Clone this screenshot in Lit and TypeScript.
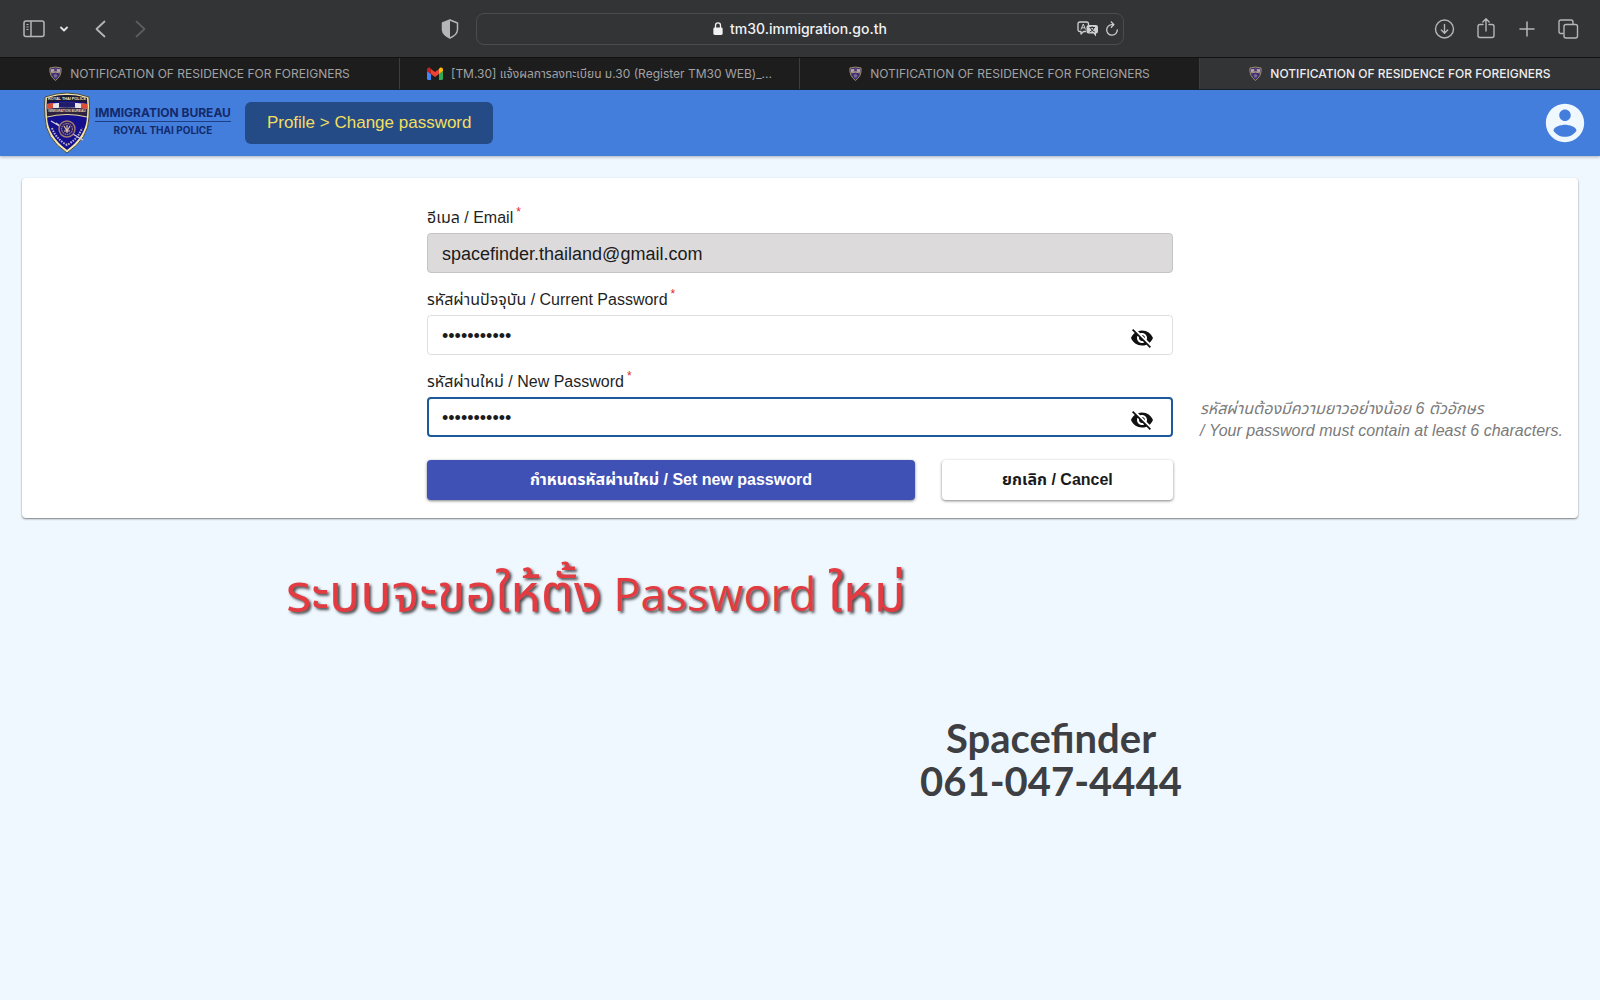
import { LitElement, html, css, svg } from "lit";
import { customElement, property, state } from "lit/decorators.js";
import { classMap } from "lit/directives/class-map.js";

const VISIBILITY_OFF =
  "M12 7c2.76 0 5 2.24 5 5 0 .65-.13 1.26-.36 1.83l2.92 2.92c1.51-1.26 2.7-2.89 3.43-4.75-1.73-4.39-6-7.5-11-7.5-1.4 0-2.74.25-3.98.7l2.16 2.16C10.74 7.13 11.35 7 12 7zM2 4.27l2.28 2.28.46.46C3.08 8.3 1.78 10.02 1 12c1.73 4.39 6 7.5 11 7.5 1.55 0 3.03-.3 4.38-.84l.42.42L19.73 22 21 20.73 3.27 3 2 4.27zM7.53 9.8l1.55 1.55c-.05.21-.08.43-.08.65 0 1.66 1.34 3 3 3 .22 0 .44-.03.65-.08l1.55 1.55c-.67.33-1.41.53-2.2.53-2.76 0-5-2.24-5-5 0-.79.2-1.53.53-2.2zm4.31-.78l3.15 3.15.02-.16c0-1.66-1.34-3-3-3l-.17.01z";
const VISIBILITY =
  "M12 4.5C7 4.5 2.73 7.61 1 12c1.73 4.39 6 7.5 11 7.5s9.27-3.11 11-7.5c-1.73-4.39-6-7.5-11-7.5zM12 17c-2.76 0-5-2.24-5-5s2.24-5 5-5 5 2.24 5 5-2.24 5-5 5zm0-8c-1.66 0-3 1.34-3 3s1.34 3 3 3 3-1.34 3-3-1.34-3-3-3z";

/* Immigration Bureau shield, drawn on a 46 x 62 grid. */
const shield = svg`
  <path d="M1 5Q12 1 23 1Q34 1 45 5Q46 14 45 25Q45 46 23 61Q1 46 1 25Q0 14 1 5Z" fill="#f1e5a8" stroke="#4b4a3c" stroke-width="1"/>
  <path d="M3 6Q13 3 23 3Q33 3 43 6Q44 15 43 25Q42 44 23 58Q4 44 3 25Q2 15 3 6Z" fill="#140f8c"/>
  <path d="M3 6Q13 3 23 3Q33 3 43 6L43 11Q23 7 3 11Z" fill="#1c1930"/>
  <path d="M3 12Q23 9 43 12L43 17Q23 14 3 17Z" fill="#e9e4ea"/>
  <path d="M3 12L9 11L9 16L3 17Z" fill="#dc4d33"/>
  <path d="M37 11L43 12L43 17L37 16Z" fill="#dc4d33"/>
  <path d="M15 10.500Q23 9.500 31 10.500L31 15.500Q23 15 15 15.500Z" fill="#211d6d"/>
  <path d="M3 17Q23 14 43 17L43 25Q23 20 3 25Z" fill="#2d2340"/>
  <path d="M3 25Q23 20 43 25" fill="none" stroke="#e8d9a0" stroke-width="1"/>
  <path d="M7 29L39 48M16 34L12 31" stroke="#d5d0dc" stroke-width="1.3"/>
  <path d="M8 36Q12 47 23 53Q34 47 38 36" fill="none" stroke="#b9b0c4" stroke-width="2" stroke-dasharray="1.6 1.1"/>
  <circle cx="23" cy="37" r="8" fill="#241a72" stroke="#a57c74" stroke-width="1.4"/>
  <circle cx="23" cy="37" r="5.4" fill="none" stroke="#c9a08a" stroke-width="1" stroke-dasharray="1.5 .8"/>
  <path d="M20 34L23 39L26 34M20 39H26M23 33V41" stroke="#e2c3a4" stroke-width="1.1" fill="none"/>
  <text x="23" y="8.2" text-anchor="middle" font-size="3.8" font-weight="700" fill="#f1e7c8">ROYAL THAI POLICE</text>
  <text x="23" y="20.4" text-anchor="middle" font-size="3.300" font-weight="700" fill="#e6d9b8">IMMIGRATION BUREAU</text>`;

/* The same shield reduced for tab icons. */
const shieldMini = svg`
  <path d="M1 1.500Q7 -.5 13 1.500Q14 10 7 15Q0 10 1 1.500Z" fill="#3a2f6e" stroke="#a5936f" stroke-width="1"/>
  <path d="M2 3Q7 1.500 12 3V6Q7 4.500 2 6Z" fill="#b8a6a4"/>
  <path d="M5.500 2.500H8.500V4.800H5.500Z" fill="#4a3a74"/>
  <path d="M2 6.800Q7 5.300 12 6.800" stroke="#b8a48c" fill="none"/>
  <circle cx="7" cy="10" r="2" fill="#7a6699"/>`;

const gmail = svg`
  <path d="M1.500 13H4V7L0 4v7.500A1.500 1.500 0 0 0 1.500 13Z" fill="#4285f4"/>
  <path d="M12 13h2.500a1.500 1.500 0 0 0 1.500-1.500V4l-4 3Z" fill="#34a853"/>
  <path d="M12 2v5l4-3V2.500C16 .8 14 0 12.700 1Z" fill="#fbbc04"/>
  <path d="M4 7V2l4 3 4-3v5L8 10Z" fill="#ea4335"/>
  <path d="M0 2.500V4l4 3V2L3.300 1C2 0 0 .8 0 2.500Z" fill="#c5221f"/>`;

interface TabInfo {
  title: string;
  icon: "shield" | "gmail";
  active?: boolean;
}

@customElement("browser-bar")
class BrowserBar extends LitElement {
  static styles = css`
    :host {
      display: block;
      font-family: Inter, "Noto Sans Thai", "Liberation Sans", sans-serif;
      background: #333436;
      color: #b5b6b8;
    }
    svg {
      display: block;
      fill: none;
      stroke: currentColor;
    }
    button {
      display: flex;
      align-items: center;
      justify-content: center;
      border: 0;
      padding: 0;
      background: none;
      color: inherit;
      font: inherit;
    }
    .toolbar {
      display: grid;
      grid-template-columns: 1fr 648px 1fr;
      column-gap: 16px;
      align-items: center;
      height: 57px;
      padding: 0 20px;
    }
    .group {
      display: flex;
      align-items: center;
    }
    .start {
      justify-content: space-between;
    }
    .sidebar {
      gap: 12px;
      margin-right: 20px;
    }
    .nav {
      gap: 16px;
    }
    .end {
      justify-content: flex-end;
      gap: 17px;
    }
    .dim {
      color: #5b5c5e;
    }
    .address {
      display: grid;
      grid-template-columns: 48px 1fr 48px;
      align-items: center;
      height: 30px;
      border: 1px solid #4b4c4e;
      border-radius: 8px;
      padding: 0 4px;
    }
    .url {
      display: flex;
      align-items: center;
      justify-content: center;
      gap: 7px;
      font-size: 14px;
      font-weight: 500;
      color: #f1f1f2;
    }
    .tools {
      display: flex;
      align-items: center;
      justify-content: flex-end;
      gap: 6px;
      color: #d0d0d1;
    }
    .tabs {
      display: grid;
      grid-template-columns: repeat(4, 1fr);
      height: 31px;
      border-top: 1px solid #111213;
      border-bottom: 1px solid #15222f;
      background: #1d1d1e;
    }
    .tab {
      gap: 8px;
      min-width: 0;
      border-right: 1px solid #3c3d3f;
      font-size: 12px;
      color: #a2a2a4;
      white-space: nowrap;
    }
    .tab svg {
      stroke: none;
    }
    .active {
      background: #333436;
      border-right: 0;
      color: #eeeeef;
      font-weight: 500;
    }
  `;

  @property({ attribute: false }) tabs: TabInfo[] = [];

  render() {
    return html`
      <div class="toolbar">
        <div class="group start">
          <div class="group">
            <div class="group sidebar">
              <button aria-label="Show sidebar">
                <svg width="28" height="20" viewBox="0 0 28 20">
                  <rect x="4" y="2" width="20" height="15.500" rx="2" stroke-width="1.500" />
                  <path d="M11 2V17.500" stroke-width="1.500" />
                  <path d="M6.500 5.500H8.500M6.500 8H8.500M6.500 10.500H8.500" />
                </svg>
              </button>
              <button aria-label="Tab groups">
                <svg width="8" height="8" viewBox="0 0 8 8">
                  <path d="M1 2.500L4 5.500L7 2.500" stroke="#e4e4e5" stroke-width="1.800" stroke-linecap="round" stroke-linejoin="round" />
                </svg>
              </button>
            </div>
            <div class="group nav">
              <button aria-label="Back">
                <svg width="24" height="24" viewBox="0 0 24 24">
                  <path d="M16.500 4.500L8.500 12L16.500 19.500" stroke-width="1.800" stroke-linecap="round" stroke-linejoin="round" />
                </svg>
              </button>
              <button class="dim" aria-label="Forward">
                <svg width="24" height="24" viewBox="0 0 24 24">
                  <path d="M8.500 4.500L16.500 12L8.500 19.500" stroke-width="1.800" stroke-linecap="round" stroke-linejoin="round" />
                </svg>
              </button>
            </div>
          </div>
          <button aria-label="Privacy report">
            <svg width="20" height="20" viewBox="0 0 18 20">
              <path d="M9 1L16.500 4V11Q16 16 9 19Q2 16 1.500 11V4Z" stroke-width="1.500" stroke-linejoin="round" />
              <path d="M9 1V19Q2 16 1.500 11V4Z" fill="currentColor" stroke="none" />
            </svg>
          </button>
        </div>
        <div class="address">
          <span></span>
          <span class="url">
            <svg width="10" height="13" viewBox="0 0 10 14">
              <rect x="0" y="6" width="10" height="8" rx="1.500" fill="currentColor" stroke="none" />
              <path d="M2.300 6.500V3.700Q2.300 1 5 1Q7.700 1 7.700 3.700V6.500" stroke-width="1.400" />
            </svg>
            tm30.immigration.go.th
          </span>
          <span class="tools">
            <button aria-label="Translate">
              <svg width="22" height="16" viewBox="0 0 22 16">
                <path d="M9 10.500H6.500L4 13V10.500H3Q1 10.500 1 8.500V3Q1 1 3 1H9.500Q11.500 1 11.500 3V4" stroke-width="1.300" stroke-linejoin="round" />
                <path d="M4 8.500L6.300 3L8.500 8.500M4.800 6.800H7.800" stroke-width="1" />
                <path d="M11.500 4H19Q21 4 21 6V10.500Q21 12.500 19 12.500V15.500L16.500 12.500H11.500Q9.500 12.500 9.500 10.500V6Q9.500 4 11.500 4Z" fill="currentColor" stroke="none" />
                <path d="M12.500 6.500H18M15.200 5.300V6.500M17 6.700Q16 10 12.800 11M13.300 6.700Q14.500 10 17.800 11" stroke="#333436" stroke-width="1" />
              </svg>
            </button>
            <button aria-label="Reload">
              <svg width="14" height="16" viewBox="0 0 14 16">
                <path d="M12.300 8.800A5.300 5.300 0 1 1 7 3.600H8.500" stroke-width="1.300" stroke-linecap="round" />
                <path d="M6.300 1L8.900 3.600L6.300 6.200" stroke-width="1.300" stroke-linecap="round" stroke-linejoin="round" />
              </svg>
            </button>
          </span>
        </div>
        <div class="group end">
          <button aria-label="Downloads">
            <svg width="24" height="24" viewBox="0 0 24 24">
              <circle cx="11.500" cy="12" r="9" stroke-width="1.400" />
              <path d="M11.500 7.500V16M8.300 13L11.500 16.300L14.700 13" stroke-width="1.400" stroke-linecap="round" stroke-linejoin="round" />
            </svg>
          </button>
          <button aria-label="Share">
            <svg width="24" height="24" viewBox="0 0 24 24">
              <path d="M9 7.500H6Q4 7.500 4 9.500V18.500Q4 20.500 6 20.500H18Q20 20.500 20 18.500V9.500Q20 7.500 18 7.500H15M12 14V1.800M8.800 5L12 1.800L15.200 5" stroke-width="1.400" stroke-linecap="round" stroke-linejoin="round" />
            </svg>
          </button>
          <button aria-label="New tab">
            <svg width="24" height="24" viewBox="0 0 24 24">
              <path d="M12 5V19M5 12H19" stroke-width="1.500" stroke-linecap="round" />
            </svg>
          </button>
          <button aria-label="Show all tabs">
            <svg width="24" height="24" viewBox="0 0 24 24">
              <rect x="8" y="7.500" width="13.500" height="13.500" rx="2" stroke-width="1.400" />
              <path d="M7.500 16.500H5Q3 16.500 3 14.500V5Q3 3 5 3H15Q17 3 17 5V7" stroke-width="1.400" />
            </svg>
          </button>
        </div>
      </div>
      <div class="tabs" role="tablist">
        ${this.tabs.map(
          (tab) => html`
            <button role="tab" aria-selected=${tab.active ? "true" : "false"} class=${classMap({ tab: true, active: !!tab.active })}>
              ${tab.icon === "shield"
                ? html`<svg width="13" height="16" viewBox="0 0 14 16">${shieldMini}</svg>`
                : html`<svg width="16" height="13" viewBox="0 0 16 13">${gmail}</svg>`}
              <span>${tab.title}</span>
            </button>
          `,
        )}
      </div>
    `;
  }
}

@customElement("site-header")
class SiteHeader extends LitElement {
  static styles = css`
    :host {
      display: flex;
      align-items: center;
      height: 66px;
      padding: 0 12px 0 44px;
      background: #447edd;
      box-shadow: 0 1px 3px #0000004d;
      position: relative;
    }
    .brand {
      display: flex;
      align-items: center;
      gap: 5px;
      text-decoration: none;
      color: #132a6b;
      font-family: Inter, sans-serif;
      font-weight: 700;
      text-align: center;
    }
    .shield {
      display: block;
      font-family: "Liberation Sans", sans-serif;
    }
    .names {
      padding-bottom: 4px;
    }
    .bureau {
      display: block;
      border-bottom: 1px solid #1f3f87;
      font-size: 12px;
      line-height: 17px;
    }
    .police {
      display: block;
      font-size: 10px;
      line-height: 16px;
    }
    .crumb {
      margin-left: 14px;
      border-radius: 6px;
      padding: 0 22px;
      background: #254b87;
      color: #f3df5d;
      font: 17px/42px "Liberation Sans", Arial, sans-serif;
    }
    .account {
      display: flex;
      margin-left: auto;
      border: 0;
      padding: 0;
      background: none;
      color: #f0f8ff;
    }
  `;

  render() {
    return html`
      <a class="brand" href="#">
        <svg class="shield" width="46" height="62" viewBox="0 0 46 62" aria-hidden="true">${shield}</svg>
        <span class="names">
          <span class="bureau">IMMIGRATION BUREAU</span>
          <span class="police">ROYAL THAI POLICE</span>
        </span>
      </a>
      <nav class="crumb">Profile &gt; Change password</nav>
      <button class="account" aria-label="Account">
        <svg width="46" height="46" viewBox="0 0 24 24" fill="currentColor">
          <path d="M12 2C6.480 2 2 6.480 2 12s4.480 10 10 10 10-4.480 10-10S17.520 2 12 2zm0 3c1.660 0 3 1.340 3 3s-1.340 3-3 3-3-1.340-3-3 1.340-3 3-3zm0 14.200c-2.500 0-4.710-1.280-6-3.220.03-1.990 4-3.080 6-3.080 1.990 0 5.970 1.090 6 3.080-1.290 1.940-3.500 3.220-6 3.220z" />
        </svg>
      </button>
    `;
  }
}

@customElement("password-field")
class PasswordField extends LitElement {
  static styles = css`
    :host {
      display: block;
    }
    .label {
      display: block;
      font-size: 16px;
      line-height: 34px;
      height: 32px;
      white-space: nowrap;
    }
    .star {
      margin-left: 3px;
      font-size: 12px;
      line-height: 0;
      vertical-align: 7px;
      color: #e0252d;
    }
    .box {
      display: flex;
      align-items: center;
      box-sizing: border-box;
      height: 40px;
      border: 1px solid #dedede;
      border-radius: 4px;
      padding: 0 18px 0 14px;
      background: #fff;
    }
    .readonly {
      background: #dcdadb;
      border-color: #c4c4c4;
    }
    .focused {
      border: 2px solid #1d5a99;
      padding: 0 17px 0 13px;
    }
    .input {
      flex: 1;
      min-width: 0;
      border: 0;
      outline: 0;
      padding: 2px 0 0;
      background: none;
      color: #1b1b1b;
      font: 18px/24px "Liberation Sans", Arial, sans-serif;
    }
    .toggle {
      display: flex;
      border: 0;
      padding: 6px 0 0;
      background: none;
      color: #111;
    }
  `;

  @property() label = "";
  @property() value = "";
  @property({ type: Boolean }) secret = false;
  @property({ type: Boolean }) focused = false;
  @state() private shown = false;

  render() {
    return html`
      <label class="label" for="field">${this.label}<span class="star">*</span></label>
      <div class=${classMap({ box: true, readonly: !this.secret, focused: this.focused })}>
        <input
          class="input"
          id="field"
          type=${this.secret && !this.shown ? "password" : "text"}
          .value=${this.value}
          ?readonly=${!this.secret}
        />
        ${this.secret
          ? html`<button class="toggle" aria-label="Show password" @click=${() => (this.shown = !this.shown)}>
              <svg width="24" height="24" viewBox="0 0 24 24" fill="currentColor">
                <path d=${this.shown ? VISIBILITY : VISIBILITY_OFF} />
              </svg>
            </button>`
          : null}
      </div>
    `;
  }
}

@customElement("app-root")
class AppRoot extends LitElement {
  static styles = css`
    :host {
      display: block;
      min-height: 100vh;
      background: #f0f8ff;
      color: #1f1f1f;
      font-family: "Liberation Sans", Arial, "Noto Sans Thai", sans-serif;
      font-size: 16px;
    }
    .card {
      display: grid;
      grid-template-columns: 1fr 2fr 1fr;
      margin: 22px 22px 0;
      border-radius: 4px;
      padding: 23px 0 18px;
      background: #fff;
      box-shadow: 0 1px 2px #00000080;
    }
    .form {
      display: grid;
      gap: 10px;
      grid-column: 2;
      padding: 0 16px;
    }
    .hint {
      align-self: end;
      padding: 0 0 58px 11px;
      color: #7b7b7b;
      font-style: italic;
      line-height: 22px;
      white-space: nowrap;
    }
    .actions {
      display: grid;
      grid-template-columns: 19fr 9fr;
      gap: 27px;
      margin-top: 13px;
    }
    .action {
      height: 40px;
      border: 0;
      border-radius: 4px;
      padding: 0;
      background: #fff;
      color: #1a1a1a;
      font: inherit;
      font-weight: 700;
      box-shadow: 0 1px 3px #00000080;
    }
    .primary {
      background: #3f51b5;
      color: #fff;
    }
    .captions {
      position: relative;
    }
    .caption {
      position: absolute;
      left: 286px;
      top: 33px;
      margin: 0;
      color: #e23c42;
      font: 45px/80px "Open Sans", "Noto Sans Thai", sans-serif;
      white-space: nowrap;
      text-shadow: 2px 2px 3px #000000b3;
    }
    .thai {
      font-size: 52px;
    }
    .contact {
      position: absolute;
      left: 911px;
      top: 199px;
      width: 280px;
      margin: 0;
      color: #3d3f42;
      font: 700 40px/43px Lato, sans-serif;
      text-align: center;
      white-space: nowrap;
    }
    .line {
      display: block;
    }
  `;

  private tabs: TabInfo[] = [
    { title: "NOTIFICATION OF RESIDENCE FOR FOREIGNERS", icon: "shield" },
    { title: "[TM.30] แจ้งผลการลงทะเบียน ม.30 (Register TM30 WEB)_...", icon: "gmail" },
    { title: "NOTIFICATION OF RESIDENCE FOR FOREIGNERS", icon: "shield" },
    { title: "NOTIFICATION OF RESIDENCE FOR FOREIGNERS", icon: "shield", active: true },
  ];

  render() {
    return html`
      <browser-bar .tabs=${this.tabs}></browser-bar>
      <site-header></site-header>
      <main>
        <section class="card">
          <form class="form" @submit=${(e: Event) => e.preventDefault()}>
            <password-field label="อีเมล / Email" value="spacefinder.thailand@gmail.com"></password-field>
            <password-field label="รหัสผ่านปัจจุบัน / Current Password" value="abcdefghijk" secret></password-field>
            <password-field label="รหัสผ่านใหม่ / New Password" value="abcdefghijk" secret focused></password-field>
            <div class="actions">
              <button class="action primary">กำหนดรหัสผ่านใหม่ / Set new password</button>
              <button class="action" type="button">ยกเลิก / Cancel</button>
            </div>
          </form>
          <div class="hint">
            รหัสผ่านต้องมีความยาวอย่างน้อย 6 ตัวอักษร<br />/ Your password must contain at least 6 characters.
          </div>
        </section>
        <div class="captions">
          <p class="caption"><span class="thai">ระบบจะขอให้ตั้ง</span> Password <span class="thai">ใหม่</span></p>
          <p class="contact"><span class="line">Spacefinder</span><span class="line">061-047-4444</span></p>
        </div>
      </main>
    `;
  }
}
